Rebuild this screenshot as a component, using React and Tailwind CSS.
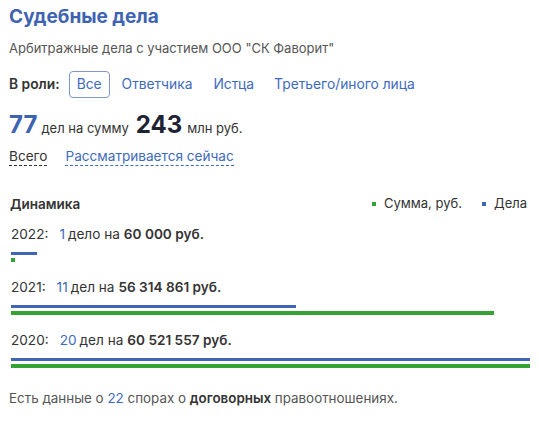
import React from 'react';

const years = [
  { year: '2022', count: 1, word: 'дело', sum: '60 000', value: 60000 },
  { year: '2021', count: 11, word: 'дел', sum: '56 314 861', value: 56314861 },
  { year: '2020', count: 20, word: 'дел', sum: '60 521 557', value: 60521557 },
];

const maxCount = 20;
const maxValue = 60521557;

const YearRow = ({ row }) => (
  <div>
    <div className="flex h-[20px] items-center pl-[2px] text-[13.6px] text-[#333]">
      <span>{row.year}:</span>
      <span className="ml-[11px] text-[#3e6ac0]">{row.count}</span>
      <span className="ml-[3px]">{row.word} на</span>
      <span className="ml-[4px] font-semibold text-[#333]">{row.sum} руб.</span>
    </div>
    <div className="mt-[8px] pl-[2px]">
      <div
        className="h-[3px] bg-[#4066b3]"
        style={{ width: `${Math.max((row.count / maxCount) * 100, 1)}%` }}
      />
      <div
        className="mt-[3px] h-[4px] bg-[#35a333]"
        style={{ width: `${Math.max((row.value / maxValue) * 100, 0.8)}%` }}
      />
    </div>
  </div>
);

export default function App() {
  return (
    <div className="h-[422px] w-[539px] bg-white px-[9px] pt-[5px] font-['Inter',sans-serif] text-[#333]">
      <h1 className="text-[19px] font-bold leading-[24px] text-[#3d63b1]">Судебные дела</h1>
      <p className="mt-[11px] text-[13px] leading-[16px] text-[#555]">
        Арбитражные дела с участием ООО "СК Фаворит"
      </p>

      <div className="mt-[15px] flex items-center text-[13.8px]">
        <span className="font-semibold text-[#333]">В роли:</span>
        <span className="ml-[9px] rounded-[4px] border border-[#7f97c4] px-[7px] py-[2px] text-[#3e6ac0]">Все</span>
        <span className="ml-[12px] text-[#3e6ac0]">Ответчика</span>
        <span className="ml-[21px] text-[#3e6ac0]">Истца</span>
        <span className="ml-[20px] text-[#3e6ac0]">Третьего/иного лица</span>
      </div>

      <div className="mt-[9px] flex items-baseline">
        <span className="text-[24px] font-bold text-[#3d63b1]">77</span>
        <span className="ml-[4px] text-[13px] text-[#333]">дел на сумму</span>
        <span className="ml-[7px] text-[24px] font-bold text-[#1e2233]">243</span>
        <span className="ml-[5px] text-[13px] text-[#333]">млн руб.</span>
      </div>

      <div className="mt-[4px] flex text-[13.6px] leading-[18px]">
        <span className="border-b border-dashed border-[#333] text-[#333]">Всего</span>
        <span className="ml-[18px] border-b border-dashed border-[#3e6ac0] text-[#3e6ac0]">
          Рассматривается сейчас
        </span>
      </div>

      <div className="mt-[28px] flex items-center justify-between pl-[1px] text-[13px]">
        <span className="text-[13.5px] font-semibold text-[#333]">Динамика</span>
        <div className="flex items-center">
          <span className="h-[4px] w-[4px] bg-[#35a333]" />
          <span className="ml-[8px] text-[#333]">Сумма, руб.</span>
          <span className="ml-[20px] h-[4px] w-[4px] bg-[#4066b3]" />
          <span className="ml-[8px] mr-[3px] text-[#333]">Дела</span>
        </div>
      </div>

      <div className="mt-[10px] flex flex-col gap-[15px]">
        {years.map((row) => (
          <YearRow key={row.year} row={row} />
        ))}
      </div>

      <p className="mt-[20px] text-[13.4px] text-[#555]">
        Есть данные о <span className="text-[#3e6ac0]">22</span> спорах о{' '}
        <span className="font-semibold text-[#333]">договорных</span> правоотношениях.
      </p>
    </div>
  );
}
